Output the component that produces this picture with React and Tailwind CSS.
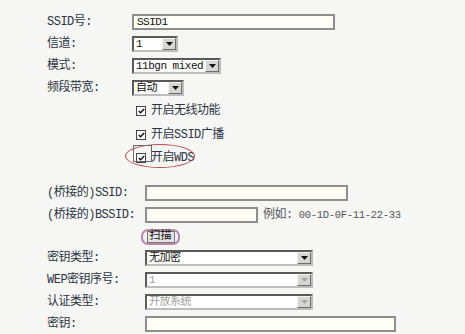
import React from 'react';

const font = { fontFamily: '"Liberation Mono", "Noto Sans CJK SC", monospace' };

function Arrow({ disabled }) {
  return (
    <span className="flex h-full w-[14px] shrink-0 items-center justify-center border border-t-[#f4f4f4] border-l-[#f4f4f4] border-b-[#6e6e6e] border-r-[#6e6e6e] bg-[#d6d6d2]">
      <svg width="7" height="4" viewBox="0 0 7 4">
        <path d="M0 0h7L3.5 4z" fill={disabled ? '#a8a8a8' : '#111'} />
      </svg>
    </span>
  );
}

function Select({ value, width, disabled }) {
  return (
    <div
      className={`flex h-[16px] items-stretch border-2 border-t-[#5a5a5a] border-l-[#5a5a5a] border-b-[#bdbdbd] border-r-[#bdbdbd] bg-white ${width}`}
    >
      <span
        className={`flex flex-1 items-center overflow-hidden whitespace-nowrap pl-[2px] text-[11px] leading-none tracking-[-0.5px] ${
          disabled ? 'text-[#a0a0a0]' : 'text-[#111]'
        }`}
      >
        {value}
      </span>
      <Arrow disabled={disabled} />
    </div>
  );
}

function Input({ value, width }) {
  return (
    <div
      className={`flex h-[16px] items-center border-2 border-[#8e8e8e] bg-[#fffff8] pl-[3px] text-[11px] leading-none tracking-[-0.5px] text-[#111] ${width}`}
    >
      {value}
    </div>
  );
}

function Check({ label }) {
  return (
    <div className="flex items-center">
      <span className="ml-[4px] flex h-[10px] w-[10px] items-center justify-center border border-[#444] bg-white">
        <svg width="7" height="6" viewBox="0 0 7 6">
          <path d="M0.8 3l1.8 1.8L6.2 1" stroke="#111" strokeWidth="1.4" fill="none" />
        </svg>
      </span>
      <span className="ml-[5px] text-[12px] leading-none tracking-[-0.5px] text-[#2c3444]">{label}</span>
    </div>
  );
}

function Row({ label, h = 'h-[22px]', col = 'w-[85px]', children }) {
  return (
    <div className={`flex items-center ${h}`}>
      <span className={`shrink-0 text-[12px] leading-none tracking-[-0.5px] text-[#2c3444] ${col}`}>{label}</span>
      {children}
    </div>
  );
}

export default function App() {
  return (
    <div className="relative h-[334px] w-[465px] overflow-hidden bg-[#f6f6f4] pl-[47px] pt-[11px]" style={font}>
      <Row label="SSID号:">
        <Input value="SSID1" width="w-[203px]" />
      </Row>
      <Row label="信道:">
        <Select value="1" width="w-[46px]" />
      </Row>
      <Row label="模式:">
        <Select value="11bgn mixed" width="w-[89px]" />
      </Row>
      <Row label="频段带宽:">
        <Select value="自动" width="w-[52px]" />
      </Row>
      <Row label="" h="h-[24px]">
        <Check label="开启无线功能" />
      </Row>
      <Row label="" h="h-[24px]">
        <Check label="开启SSID广播" />
      </Row>
      <Row label="" h="h-[22px]">
        <div className="relative">
          <Check label="开启WDS" />
          <span className="absolute left-[-7px] top-[-8px] h-[24px] w-[70px] rounded-[50%] border border-[#b5534f]" />
          <span className="absolute left-[1px] top-[-7px] h-[17px] w-[19px] border border-[#6a6a6a]" />
        </div>
      </Row>
      <div className="h-[13px]" />
      <Row label="(桥接的)SSID:" col="w-[98px]">
        <Input value="" width="w-[203px]" />
      </Row>
      <Row label="(桥接的)BSSID:" col="w-[98px]">
        <Input value="" width="w-[113px]" />
        <span className="ml-[5px] text-[12px] leading-none tracking-[-0.5px] text-[#555]">例如:</span>
        <span className="ml-[6px] text-[10.5px] leading-none tracking-[-0.3px] text-[#555]">00-1D-0F-11-22-33</span>
      </Row>
      <Row label="" col="w-[94px]" h="h-[21px]">
        <div className="flex h-[16px] w-[39px] items-center justify-center rounded-[7px] border-2 border-[#b48aa6] bg-[#f2eef1]">
          <span className="flex h-[12px] items-center border border-[#777] bg-[#e4e4e4] px-[2px] text-[11px] leading-none text-[#111]">扫描</span>
        </div>
      </Row>
      <Row label="密钥类型:" col="w-[98px]">
        <Select value="无加密" width="w-[168px]" />
      </Row>
      <Row label="WEP密钥序号:" col="w-[98px]">
        <Select value="1" width="w-[168px]" disabled />
      </Row>
      <Row label="认证类型:" col="w-[98px]">
        <Select value="开放系统" width="w-[168px]" disabled />
      </Row>
      <Row label="密钥:" col="w-[98px]">
        <Input value="" width="w-[251px]" />
      </Row>
    </div>
  );
}
